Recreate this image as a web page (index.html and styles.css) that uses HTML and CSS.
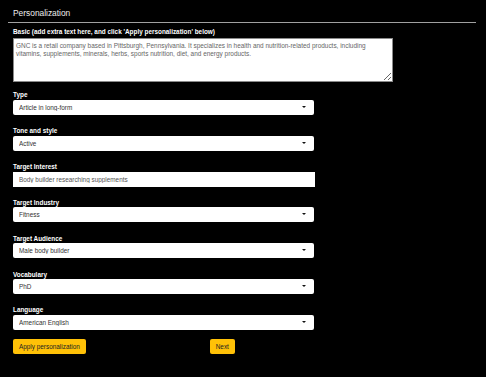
FILE: index.html
```html
<!DOCTYPE html>
<html lang="en">
<head>
<meta charset="utf-8">
<title>Personalization</title>
<link rel="stylesheet" href="styles.css">
</head>
<body>
<div class="page">
  <h2 class="title">Personalization</h2>
  <form class="form">
    <div class="field field-basic">
      <label class="label label-basic" for="basic">Basic (add extra text here, and click 'Apply personalization' below)</label>
      <textarea id="basic" class="textarea">GNC is a retail company based in Pittsburgh, Pennsylvania. It specializes in health and nutrition-related products, including vitamins, supplements, minerals, herbs, sports nutrition, diet, and energy products.</textarea>
    </div>
    <div class="field">
      <label class="label" for="type">Type</label>
      <div class="select-wrap"><select id="type" class="select"><option>Article in long-form</option></select></div>
    </div>
    <div class="field">
      <label class="label" for="tone">Tone and style</label>
      <div class="select-wrap"><select id="tone" class="select"><option>Active</option></select></div>
    </div>
    <div class="field">
      <label class="label" for="interest">Target Interest</label>
      <input id="interest" class="input" type="text" value="Body builder researching supplements">
    </div>
    <div class="field">
      <label class="label" for="industry">Target Industry</label>
      <div class="select-wrap"><select id="industry" class="select"><option>Fitness</option></select></div>
    </div>
    <div class="field">
      <label class="label" for="audience">Target Audience</label>
      <div class="select-wrap"><select id="audience" class="select"><option>Male body builder</option></select></div>
    </div>
    <div class="field">
      <label class="label" for="vocab">Vocabulary</label>
      <div class="select-wrap"><select id="vocab" class="select"><option>PhD</option></select></div>
    </div>
    <div class="field field-last">
      <label class="label" for="lang">Language</label>
      <div class="select-wrap"><select id="lang" class="select"><option>American English</option></select></div>
    </div>
    <div class="actions">
      <button type="button" class="btn">Apply personalization</button>
      <button type="button" class="btn">Next</button>
    </div>
  </form>
</div>
</body>
</html>
```

FILE: styles.css
```css
* { box-sizing: border-box; }
html, body { margin: 0; background: #000; }
body {
  font-family: "Liberation Sans", Arial, sans-serif;
  color: #fff;
}
.page { margin: 0 10px 0 8px; }
.title {
  margin: 0;
  padding: 8px 0 4px 5px;
  font-size: 8.4px;
  line-height: 10px;
  font-weight: normal;
  color: #eee;
  border-bottom: 1px solid #a0a0a0;
}
.form { padding: 4.7px 0 0 5px; }
.field { margin-bottom: 12.33px; }
.field-basic { margin-bottom: 9.8px; }
.field-last { margin-bottom: 9.3px; }
.label {
  display: block;
  font-size: 6.4px;
  line-height: 8px;
  font-weight: bold;
  color: #fff;
  margin-bottom: 0.5px;
}
.label-basic { margin-bottom: 2.6px; }
.textarea {
  display: block;
  width: 380px;
  height: 43.4px;
  margin: 0;
  padding: 3px 2px;
  border: 1px solid #8a8a8a;
  background: #fff;
  font-family: "Liberation Sans", Arial, sans-serif;
  font-size: 6.45px;
  line-height: 7.9px;
  color: #666;
  overflow: hidden;
}
.select-wrap {
  position: relative;
  width: 301px;
}
.select-wrap::after {
  content: "";
  position: absolute;
  right: 8.5px;
  top: 6px;
  border-left: 2px solid transparent;
  border-right: 2px solid transparent;
  border-top: 2.5px solid #111;
  pointer-events: none;
}
.select {
  display: block;
  width: 301px;
  height: 15px;
  margin: 0;
  padding: 0 6px;
  border: none;
  border-radius: 2px;
  background: #fff;
  -webkit-appearance: none;
  appearance: none;
  font-family: "Liberation Sans", Arial, sans-serif;
  font-size: 6.4px;
  color: #333;
  outline: none;
}
.input {
  display: block;
  width: 302px;
  height: 15px;
  margin: 0;
  padding: 0 6px;
  border: none;
  border-radius: 0;
  background: #fff;
  font-family: "Liberation Sans", Arial, sans-serif;
  font-size: 6.4px;
  color: #555;
  outline: none;
}
.actions {
  display: flex;
  gap: 124px;
}
.btn {
  height: 15px;
  margin: 0;
  padding: 0 6px;
  border: none;
  border-radius: 2px;
  background: #ffc107;
  color: #222;
  font-family: "Liberation Sans", Arial, sans-serif;
  font-size: 6.4px;
  line-height: 15px;
}
```
